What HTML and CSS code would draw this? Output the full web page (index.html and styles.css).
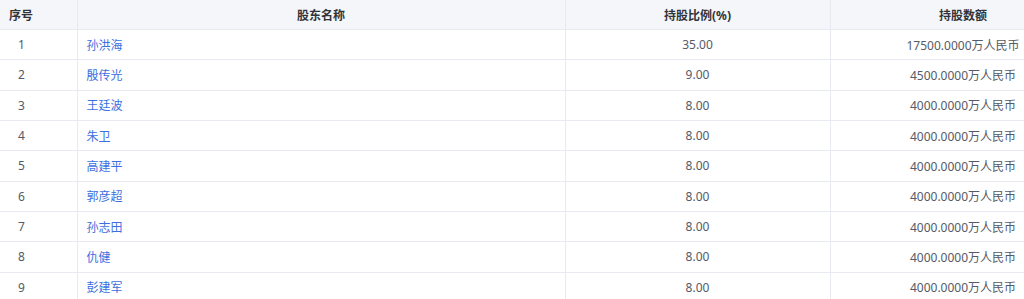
FILE: index.html
```html
<!DOCTYPE html>
<html lang="zh">
<head>
<meta charset="utf-8">
<link rel="stylesheet" href="styles.css">
</head>
<body>
<div class="wrap">
<table class="grid">
  <colgroup>
    <col class="c1"><col class="c2"><col class="c3"><col class="c4">
  </colgroup>
  <thead>
    <tr>
      <th class="idx">序号</th>
      <th>股东名称</th>
      <th>持股比例(%)</th>
      <th>持股数额</th>
    </tr>
  </thead>
  <tbody>
    <tr><td class="idx">1</td><td class="name"><a>孙洪海</a></td><td>35.00</td><td>17500.0000万人民币</td></tr>
    <tr><td class="idx">2</td><td class="name"><a>殷传光</a></td><td>9.00</td><td>4500.0000万人民币</td></tr>
    <tr><td class="idx">3</td><td class="name"><a>王廷波</a></td><td>8.00</td><td>4000.0000万人民币</td></tr>
    <tr><td class="idx">4</td><td class="name"><a>朱卫</a></td><td>8.00</td><td>4000.0000万人民币</td></tr>
    <tr><td class="idx">5</td><td class="name"><a>高建平</a></td><td>8.00</td><td>4000.0000万人民币</td></tr>
    <tr><td class="idx">6</td><td class="name"><a>郭彦超</a></td><td>8.00</td><td>4000.0000万人民币</td></tr>
    <tr><td class="idx">7</td><td class="name"><a>孙志田</a></td><td>8.00</td><td>4000.0000万人民币</td></tr>
    <tr><td class="idx">8</td><td class="name"><a>仇健</a></td><td>8.00</td><td>4000.0000万人民币</td></tr>
    <tr><td class="idx">9</td><td class="name"><a>彭建军</a></td><td>8.00</td><td>4000.0000万人民币</td></tr>
  </tbody>
</table>
</div>
</body>
</html>
```

FILE: styles.css
```css
html, body {
  margin: 0;
  padding: 0;
  background: #ffffff;
  overflow: hidden;
}
body {
  font-family: "Noto Sans", "Noto Sans CJK SC", sans-serif;
  font-size: 12px;
  color: #555a66;
}
.wrap {
  width: 1024px;
  overflow: hidden;
}
.grid {
  width: 1096px;
  border-collapse: collapse;
  table-layout: fixed;
}
.c1 { width: 77px; }
.c2 { width: 488px; }
.c3 { width: 265px; }
.c4 { width: 266px; }
.grid th,
.grid td {
  padding: 0 9px;
  text-align: center;
  border-bottom: 1px solid #e7eaf1;
  border-right: 1px solid #e7eaf1;
  white-space: nowrap;
  overflow: hidden;
}
.grid th {
  height: 29px;
  background: #f5f6fa;
  color: #303338;
  font-weight: 700;
}
.grid td {
  height: 29.33px;
}
.grid th.idx {
  text-align: left;
}
.grid td.idx {
  text-align: left;
  padding-left: 18px;
}
.grid td.name {
  text-align: left;
}
.grid td.name a {
  color: #3d6fe0;
  text-decoration: none;
}
```
